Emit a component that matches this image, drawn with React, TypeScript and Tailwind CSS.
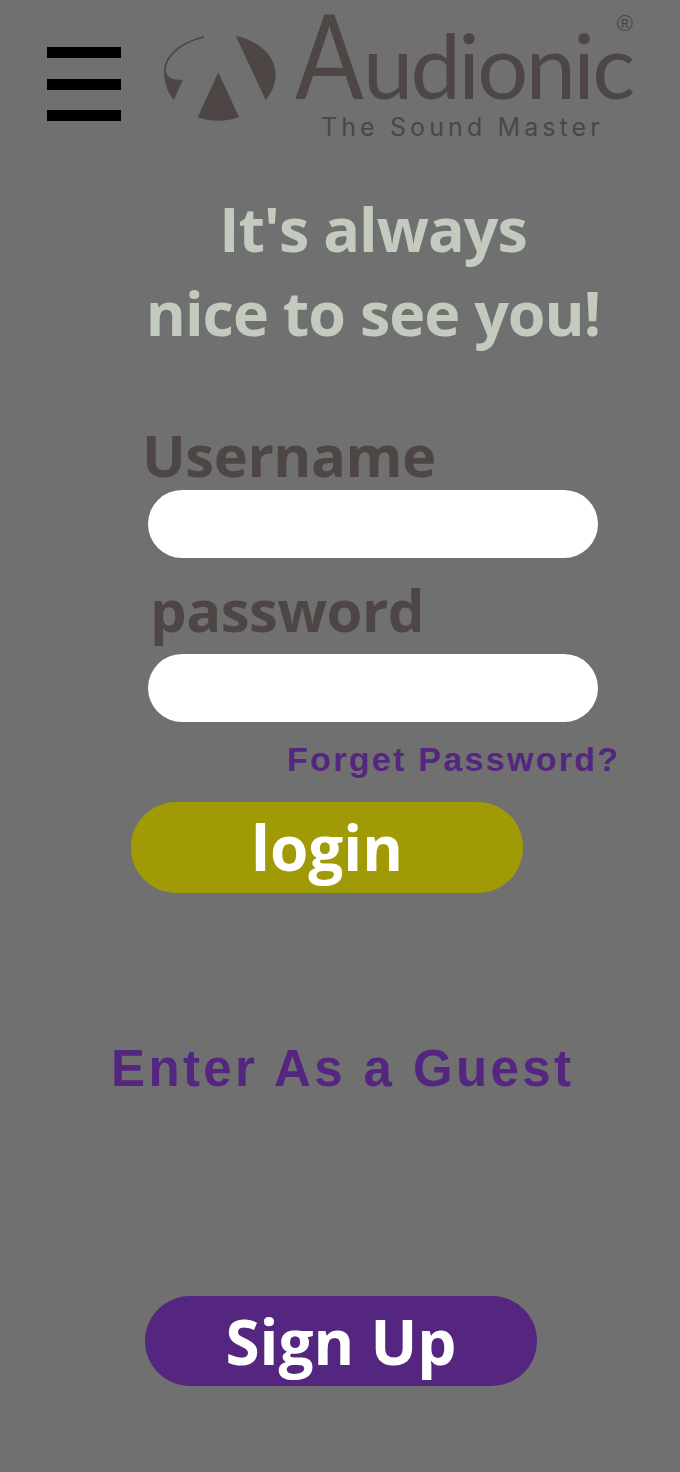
export default function App() {
  return (
    <div className="w-[680px] h-[1472px] bg-[#707070] overflow-hidden font-['Open_Sans',sans-serif]">
      <header className="flex pl-[47px] h-[190px]">
        <div className="mt-[47px] w-[74px] h-[74px] flex flex-col justify-between shrink-0">
          <div className="h-[11px] bg-black" />
          <div className="h-[11px] bg-black" />
          <div className="h-[11px] bg-black" />
        </div>
        <svg className="ml-[42px] mt-[35px] shrink-0" width="114" height="87" viewBox="0 0 114 87" fill="#4e4645">
          <path d="M72.7 0.7 C97 6 113 22 112.7 40 C112.7 49 108 59 102.7 65 Z" />
          <path d="M55.3 37.3 L76 82.3 C62 87 48 87 34.7 82.3 Z" />
          <path d="M41 1 C20 6.5 1 18 1 36.7 C1 48 5 58 11 65 L19.7 45 C13 44.5 9 44.5 6 42 C3 39.5 2.5 36 3 32 C6 18 24 6 41 3 Z" />
        </svg>
        <div className="relative ml-[18px] w-[342px] h-[140px] text-[#4e4645] font-['Lato',sans-serif]">
          <div className="flex items-baseline mt-[12px] whitespace-nowrap font-normal">
            <span className="inline-block origin-left scale-x-[0.86] text-[118px] leading-[84px] tracking-[-12px]">A</span>
            <span className="text-[90px] leading-[84px] tracking-[-2.6px]">udionic</span>
          </div>
          <div className="font-['Inter',sans-serif] text-[25px] leading-[25px] tracking-[4.1px] ml-[26px] mt-[9px] whitespace-nowrap">The Sound Master</div>
          <div className="absolute right-[4px] top-[13px] font-['Liberation_Sans',sans-serif] text-[22px] leading-none">®</div>
        </div>
      </header>
      <main className="flex flex-col">
        <h1 className="ml-[66px] w-[614px] text-center text-[#c3cbbf] font-bold text-[61px] tracking-[-1px] leading-[84px] mt-[-3px]">
          It's always<br />nice to see you!
        </h1>
        <div className="ml-[142px] mt-[65px] text-[#4e4645] font-bold text-[58px] tracking-[-0.5px] leading-[70px]">Username</div>
        <div className="ml-[148px] w-[450px] h-[68px] bg-white rounded-[34px]" />
        <div className="ml-[150px] mt-[17px] text-[#4e4645] font-bold text-[58px] tracking-[-0.5px] leading-[70px]">password</div>
        <div className="ml-[148px] w-[450px] h-[68px] mt-[9px] bg-white rounded-[34px]" />
        <div className="ml-[287px] mt-[18px] text-[#54267f] font-['Liberation_Sans',sans-serif] font-bold text-[34px] leading-[38px] tracking-[2.3px] whitespace-nowrap">Forget Password?</div>
        <div className="ml-[131px] mt-[24px] w-[392px] h-[91px] rounded-[45px] bg-[#a09a06] text-white font-bold text-[62px] flex items-center justify-center">login</div>
        <div className="ml-[111px] mt-[147px] text-[#54267f] font-['Liberation_Sans',sans-serif] font-bold text-[51px] leading-[58px] tracking-[3.4px] whitespace-nowrap">Enter As a Guest</div>
        <div className="ml-[145px] mt-[198px] w-[392px] h-[90px] rounded-[45px] bg-[#54267f] text-white font-bold text-[62px] flex items-center justify-center">Sign Up</div>
      </main>
    </div>
  );
}
